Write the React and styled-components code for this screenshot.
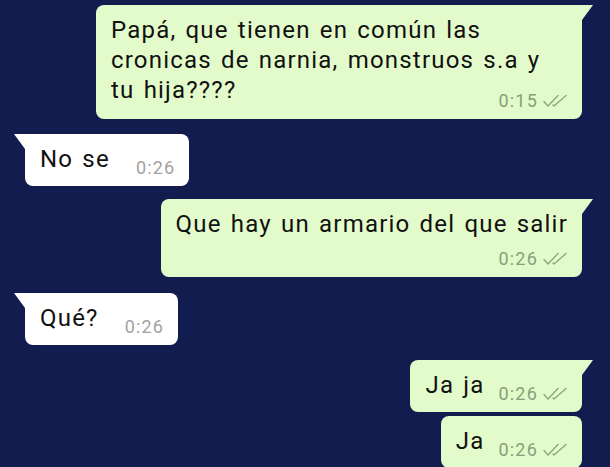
import styled, { createGlobalStyle } from 'styled-components';

const GlobalStyle = createGlobalStyle`
  html, body {
    margin: 0;
    background: #131c4f;
  }
  body {
    font-family: Roboto, "Noto Sans", sans-serif;
  }
`;

const Chat = styled.div`
  display: flex;
  flex-direction: column;
  box-sizing: border-box;
  height: 467px;
  padding: 5px 28px 0 25px;
  overflow: hidden;
`;

const Row = styled.div`
  display: flex;
  justify-content: ${(p) => (p.$out ? 'flex-end' : 'flex-start')};
  margin-top: ${(p) => p.$gap || 0}px;
`;

const Bubble = styled.div`
  position: relative;
  display: flow-root;
  box-sizing: border-box;
  max-width: 486px;
  padding: 10px 14px 8px 15px;
  background: ${(p) => (p.$out ? '#e3fbcb' : '#ffffff')};
  border-radius: 8px;
  ${(p) => p.$tail && (p.$out ? 'border-top-right-radius: 0;' : 'border-top-left-radius: 0;')}
  color: #111;
  font-size: 24px;
  line-height: 30px;
  letter-spacing: 1.2px;
  word-spacing: 2px;

  &::after {
    content: '';
    display: ${(p) => (p.$tail ? 'block' : 'none')};
    position: absolute;
    top: 0;
    width: 11px;
    height: 15px;
    background: inherit;
    ${(p) =>
      p.$out
        ? 'right: -11px; clip-path: polygon(0 0, 100% 0, 0 100%);'
        : 'left: -11px; clip-path: polygon(0 0, 100% 0, 100% 100%);'}
  }
`;

const Meta = styled.span`
  float: ${(p) => (p.$stacked ? 'none' : 'right')};
  display: flex;
  justify-content: flex-end;
  align-items: center;
  gap: 5px;
  margin: ${(p) => (p.$stacked ? '10px 0 0 0' : `${p.$low ? 16 : 14}px 0 0 ${p.$out ? 14 : 26}px`)};
  color: ${(p) => (p.$out ? '#88a07a' : '#a2a2a2')};
  font-size: 18px;
  line-height: 20px;
  letter-spacing: 1.2px;
  word-spacing: 0;
`;

const Ticks = () => (
  <svg width="25" height="14" viewBox="0 0 25 14" fill="none" stroke="#8ca47e" strokeWidth="1.3" strokeLinecap="round" strokeLinejoin="round">
    <path d="M1 7.5 L5 12 L15 1.5" />
    <path d="M10 11 L11 12 L23 1.5" />
  </svg>
);

const messages = [
  { out: true, text: 'Papá, que tienen en común las cronicas de narnia, monstruos s.a y tu hija????', time: '0:15', gap: 0, tail: true, low: true },
  { out: false, text: 'No se', time: '0:26', gap: 15, tail: true },
  { out: true, text: 'Que hay un armario del que salir', time: '0:26', gap: 13, tail: true, stacked: true },
  { out: false, text: 'Qué?', time: '0:26', gap: 16, tail: true },
  { out: true, text: 'Ja ja', time: '0:26', gap: 15, tail: true },
  { out: true, text: 'Ja', time: '0:26', gap: 4, tail: false },
];

export default function App() {
  return (
    <>
      <GlobalStyle />
      <Chat>
        {messages.map((m, i) => (
          <Row key={i} $out={m.out} $gap={m.gap}>
            <Bubble $out={m.out} $tail={m.tail}>
              <span>{m.text}</span>
              <Meta $out={m.out} $stacked={m.stacked} $low={m.low}>
                {m.time}
                {m.out && <Ticks />}
              </Meta>
            </Bubble>
          </Row>
        ))}
      </Chat>
    </>
  );
}
